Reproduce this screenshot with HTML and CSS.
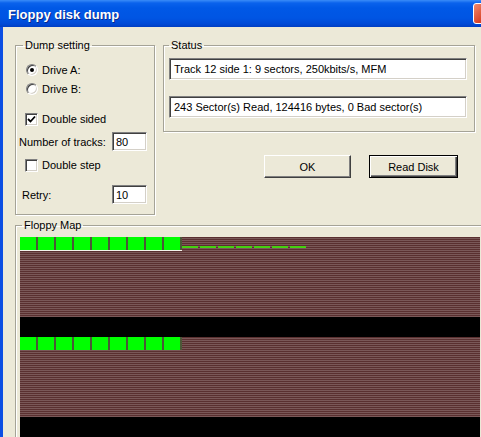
FILE: index.html
```html
<!DOCTYPE html>
<html lang="en">

<head>
    <meta charset="UTF-8">
    <title>Floppy disk dump</title>
    <link rel="stylesheet" href="styles.css">
</head>

<body>
    <div class="window">
        <!-- title bar -->
        <div class="titlebar">
            <span class="title">Floppy disk dump</span>
            <span class="close"></span>
        </div>

        <div class="client">
            <div class="top">
                <!-- left: dump settings -->
                <fieldset class="group dump">
                    <legend>Dump setting</legend>
                    <label class="opt first"><span class="radio on"></span>Drive A:</label>
                    <label class="opt second"><span class="radio"></span>Drive B:</label>
                    <label class="opt sided"><span class="check">
                            <svg width="9" height="9" viewBox="0 0 9 9">
                                <path d="M1 4 L3.5 6.5 L8 1.5" fill="none" stroke="#000" stroke-width="1.8" />
                            </svg>
                        </span>Double sided</label>
                    <div class="num tracks"><span>Number of tracks:</span><div class="edit">80</div></div>
                    <label class="opt step"><span class="check"></span>Double step</label>
                    <div class="num retry"><span>Retry:</span><div class="edit">10</div></div>
                </fieldset>

                <!-- right: status and buttons -->
                <div class="right">
                    <fieldset class="group status">
                        <legend>Status</legend>
                        <div class="field">Track 12 side 1: 9 sectors, 250kbits/s, MFM</div>
                        <div class="field">243 Sector(s) Read, 124416 bytes, 0 Bad sector(s)</div>
                    </fieldset>
                    <div class="buttons">
                        <button class="btn">OK</button>
                        <button class="btn default">Read Disk</button>
                    </div>
                </div>
            </div>

            <!-- bottom: map of the disk -->
            <fieldset class="group mapbox">
                <legend>Floppy Map</legend>
                <div class="map">
                    <div class="band">
                        <div class="row">
                            <div class="secs lit">
                                <i></i><i></i><i></i><i></i><i></i><i></i><i></i><i></i><i></i>
                            </div>
                            <div class="trail"></div>
                        </div>
                    </div>
                    <div class="band">
                        <div class="row">
                            <div class="secs">
                                <i></i><i></i><i></i><i></i><i></i><i></i><i></i><i></i><i></i>
                            </div>
                        </div>
                    </div>
                </div>
            </fieldset>
        </div>
    </div>
</body>

</html>
```

FILE: styles.css
```css
body {
    margin: 0;
    overflow: hidden;
    font-family: "Liberation Sans", Arial, sans-serif;
    font-size: 11px;
    background: #ece9d8;
}

.window {
    width: 500px;
    height: 437px;
    display: flex;
    flex-direction: column;
    overflow: hidden;
}

.titlebar {
    flex: none;
    height: 27px;
    display: flex;
    align-items: center;
    background: linear-gradient(#3a8cf8 0, #0a62ec 3px, #0058e6 8px, #0055e3 18px, #0049d6 24px, #003ec2 27px);
}

.title {
    padding: 2px 0 0 8px;
    color: #fff;
    font-weight: bold;
    font-size: 13px;
    line-height: 15px;
    text-shadow: 1px 1px 0 #0b2a8a;
}

.close {
    margin-left: auto;
    margin-right: 6px;
    width: 21px;
    height: 21px;
    box-sizing: border-box;
    border: 1px solid #fff;
    border-radius: 3px;
    background: linear-gradient(135deg, #f08a6c, #d9442a 60%, #c23418);
}

.client {
    flex: 1;
    border-left: 3px solid #0b4ee3;
    background: #ece9d8;
}

.top {
    display: flex;
    gap: 8px;
    padding: 12px 0 0 12px;
}

.group {
    margin: 0;
    padding: 0;
    box-sizing: border-box;
    border: 1px solid #a5a397;
    box-shadow: 1px 1px 0 #fff, inset 1px 1px 0 #fff;
}

.group legend {
    padding: 0 2px;
    margin-left: 6px;
    line-height: 12px;
}

.dump {
    width: 140px;
    height: 176px;
}

.dump legend {
    margin-left: 7px;
}

.opt {
    display: flex;
    align-items: center;
    gap: 4px;
    height: 16px;
    padding-left: 9px;
}

.opt.first {
    margin-top: 11px;
    padding-left: 10px;
}

.opt.second {
    margin-top: 3px;
    padding-left: 10px;
}

.opt.sided {
    margin-top: 14px;
}

.opt.step {
    margin-top: 6px;
}

.radio {
    width: 12px;
    height: 12px;
    box-sizing: border-box;
    border-radius: 50%;
    border: 1px solid;
    border-color: #808080 #fff #fff #808080;
    box-shadow: inset 1px 1px 0 #404040, inset -1px -1px 0 #d4d0c8;
    background: #fff;
    display: grid;
    place-items: center;
}

.radio.on::after {
    content: "";
    width: 4px;
    height: 4px;
    border-radius: 50%;
    background: #000;
}

.check {
    width: 13px;
    height: 13px;
    box-sizing: border-box;
    border: 1px solid;
    border-color: #808080 #fff #fff #808080;
    box-shadow: inset 1px 1px 0 #404040, inset -1px -1px 0 #d4d0c8;
    background: #fff;
    display: grid;
    place-items: center;
}

.num {
    display: grid;
    align-items: center;
    height: 19px;
}

.num.tracks {
    margin-top: 5px;
    padding-left: 3px;
    grid-template-columns: 93px 35px;
}

.num.retry {
    margin-top: 12px;
    padding-left: 6px;
    grid-template-columns: 90px 35px;
}

.edit,
.field {
    box-sizing: border-box;
    border: 1px solid;
    border-color: #808080 #fff #fff #808080;
    box-shadow: inset 1px 1px 0 #404040, inset -1px -1px 0 #d4d0c8;
    background: #fff;
    display: flex;
    align-items: center;
}

.edit {
    height: 19px;
    padding-left: 3px;
}

.right {
    display: flex;
    flex-direction: column;
}

.status {
    width: 312px;
    height: 93px;
}

.status legend {
    margin-left: 5px;
}

.field {
    width: 298px;
    height: 22px;
    margin: 7px 0 0 5px;
    padding-left: 4px;
}

.field + .field {
    margin-top: 16px;
}

.buttons {
    display: flex;
    gap: 18px;
    margin-top: 23px;
    padding-left: 101px;
}

.btn {
    width: 87px;
    height: 23px;
    box-sizing: border-box;
    padding: 0;
    font: inherit;
    color: #000;
    background: #ece9d8;
    border: 1px solid;
    border-color: #fff #404040 #404040 #fff;
    box-shadow: inset -1px -1px 0 #808080;
}

.btn.default {
    width: 89px;
    border: 1px solid #000;
    box-shadow: inset 1px 1px 0 #fff, inset -1px -1px 0 #404040, inset -2px -2px 0 #808080;
}

.mapbox {
    width: 480px;
    height: 260px;
    margin: 4px 0 0 12px;
}

.map {
    width: 460px;
    margin: 6px 0 0 4px;
}

.band {
    height: 80px;
    border-bottom: 20px solid #000;
    background: repeating-linear-gradient(to bottom, #5a3030 0 1px, #7a5858 1px 2px);
}

.row {
    display: flex;
    align-items: flex-start;
}

.secs {
    display: flex;
    gap: 2px;
    padding-right: 2px;
    background: #4b5838;
}

.secs.lit {
    border-bottom: 1px solid #f4f4ec;
}

.secs i {
    width: 16px;
    height: 13px;
    background: #00ff00;
}

.trail {
    width: 126px;
    height: 2px;
    margin-top: 9px;
    background: repeating-linear-gradient(to right, #44d010 0 16px, transparent 16px 18px);
}
```
